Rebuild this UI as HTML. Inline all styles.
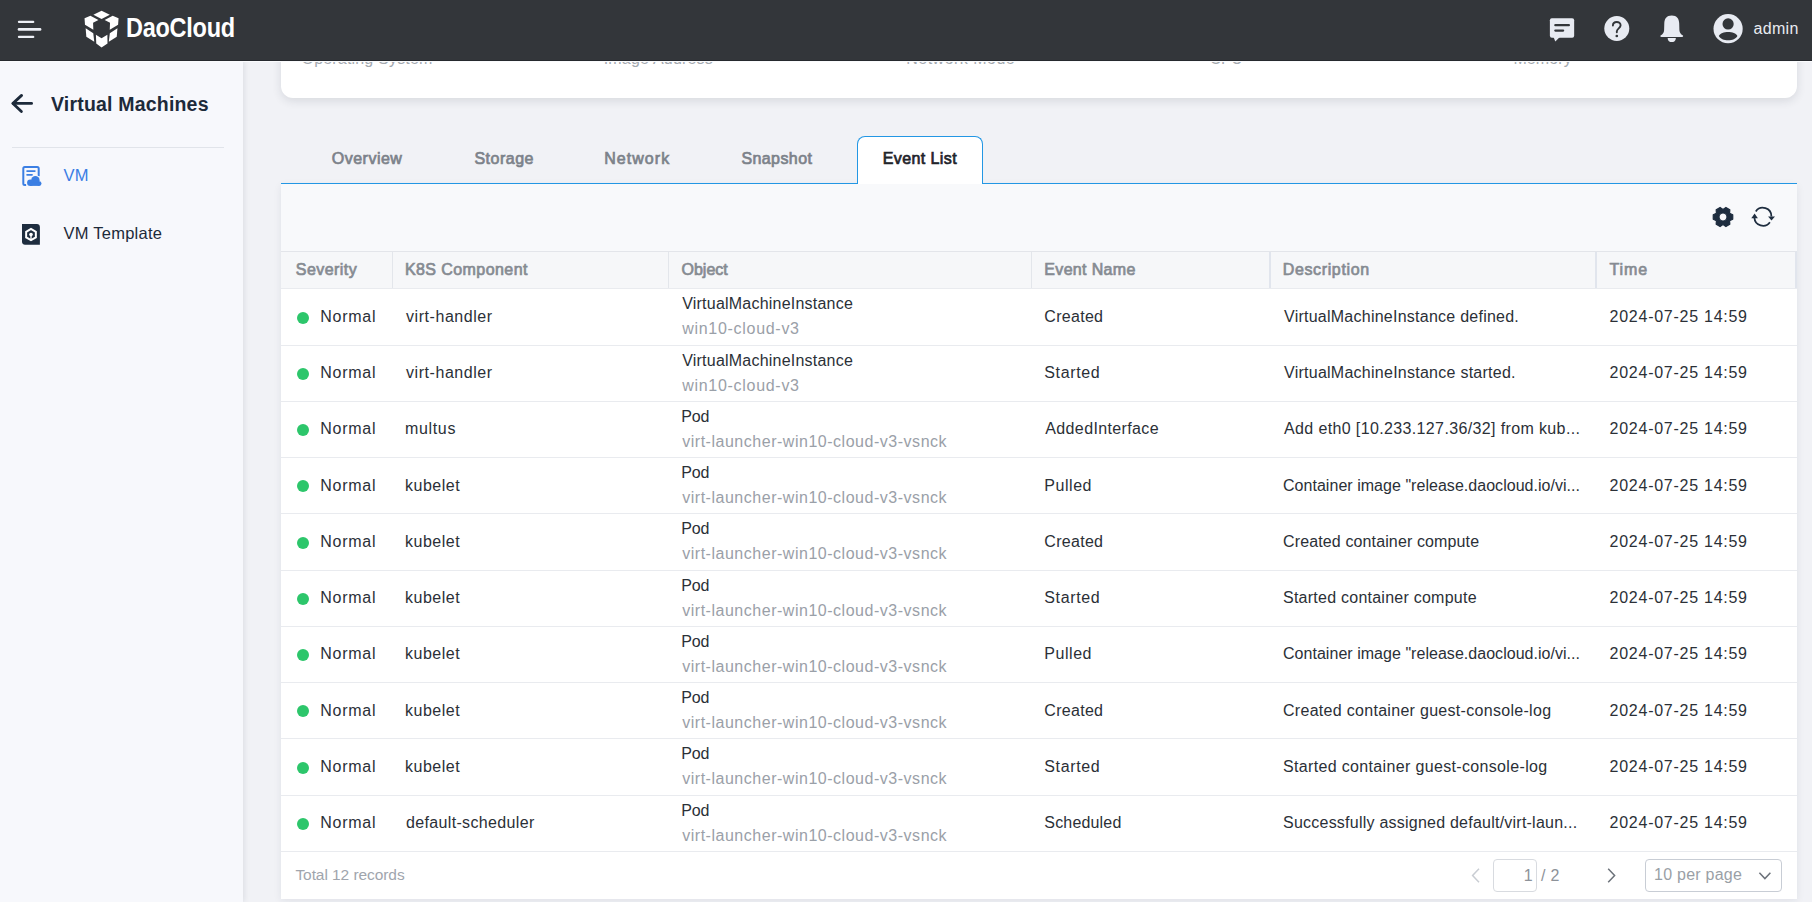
<!DOCTYPE html>
<html><head><meta charset="utf-8">
<style>
*{box-sizing:border-box;margin:0;padding:0}
html,body{width:1812px;height:902px;overflow:hidden;background:#f1f2f6;font-family:"Liberation Sans",sans-serif}
.t{position:absolute;white-space:pre;font-family:"Liberation Sans",sans-serif}
.abs{position:absolute}
#hdr{position:absolute;left:0;top:0;width:1812px;height:61px;background:#33363a;z-index:10}
#hdr:after{content:"";position:absolute;left:0;top:60px;width:1812px;height:1px;background:#26292e}
#hdrline{position:absolute;left:0;top:61px;width:1812px;height:1px;background:#fafbfd;z-index:10}
#side{position:absolute;left:0;top:61px;width:243px;height:841px;background:#f7f8fc;box-shadow:1px 0 6px rgba(20,30,50,.10);z-index:5}
#card1{position:absolute;left:281px;top:0;width:1516px;height:98px;background:#fff;border-radius:0 0 12px 12px;box-shadow:0 3px 10px rgba(30,40,60,.12)}
#tabline1{position:absolute;left:281px;top:183px;width:576px;height:1px;background:#2397e4}
#tabline2{position:absolute;left:983px;top:183px;width:814px;height:1px;background:#2397e4}
#tab{position:absolute;left:857px;top:136px;width:126px;height:48px;background:#fff;border:1px solid #2397e4;border-bottom:none;border-radius:8px 8px 0 0}
#card2{position:absolute;left:281px;top:184px;width:1516px;height:715px;background:#fff;box-shadow:0 2px 8px rgba(30,40,60,.08)}
#toolbar{position:absolute;left:281px;top:184px;width:1516px;height:67px;background:#f8f9fb}
#thead{position:absolute;left:281px;top:251px;width:1516px;height:38px;background:#f6f7f9;border-top:1px solid #e3e5ea;border-right:2px solid #e1e5ed}
.vl{position:absolute;top:252px;width:1px;height:36px;background:#e3e6eb}
.hl{position:absolute;left:281px;width:1516px;height:1px;background:#e9ebef}
.dot{position:absolute;left:297.0px;width:12px;height:12px;border-radius:50%;background:#2dc66b}
</style></head><body>
<div id="card1"></div>
<div id="card2"></div>
<div id="toolbar"></div>
<div id="tab"></div>
<div id="tabline1"></div><div id="tabline2"></div>
<div id="thead"></div>
<div class=vl style="left:392px"></div>
<div class=vl style="left:668px"></div>
<div class=vl style="left:1031px"></div>
<div class=vl style="left:1269px;width:2px;background:#e1e5ed"></div>
<div class=vl style="left:1595px;width:2px;background:#e1e5ed"></div>
<div class=hl style='top:288px'></div>
<div class=hl style='top:345px'></div>
<div class=hl style='top:401px'></div>
<div class=hl style='top:457px'></div>
<div class=hl style='top:513px'></div>
<div class=hl style='top:570px'></div>
<div class=hl style='top:626px'></div>
<div class=hl style='top:682px'></div>
<div class=hl style='top:738px'></div>
<div class=hl style='top:795px'></div>
<div class=hl style='top:851px'></div>
<div class=dot style='top:311.70px'></div>
<div class=dot style='top:367.95px'></div>
<div class=dot style='top:424.20px'></div>
<div class=dot style='top:480.45px'></div>
<div class=dot style='top:536.70px'></div>
<div class=dot style='top:592.95px'></div>
<div class=dot style='top:649.20px'></div>
<div class=dot style='top:705.45px'></div>
<div class=dot style='top:761.70px'></div>
<div class=dot style='top:817.95px'></div>

<!-- gear -->
<svg class=abs style="left:1711px;top:205px" width="24" height="24" viewBox="-12 -12 24 24">
 <path fill="#1e2d3f" stroke="#1e2d3f" stroke-width="1.2" stroke-linejoin="round" fill-rule="evenodd" d="M 9.74 -2.25 L 9.74 2.25 L 6.58 3.80 L 6.82 7.31 L 2.92 9.56 L 0.00 7.60 L -2.92 9.56 L -6.82 7.31 L -6.58 3.80 L -9.74 2.25 L -9.74 -2.25 L -6.58 -3.80 L -6.82 -7.31 L -2.92 -9.56 L -0.00 -7.60 L 2.92 -9.56 L 6.82 -7.31 L 6.58 -3.80 Z M 4.0 0 A 4.0 4.0 0 1 0 -4.0 0 A 4.0 4.0 0 1 0 4.0 0 Z"/>
</svg>
<!-- refresh -->
<svg class=abs style="left:1750px;top:204px" width="26" height="26" viewBox="-13 -13 26 26">
 <g fill="none" stroke="#1e2d3f" stroke-width="1.8">
  <path d="M -7.2 -5.6 A 8.6 8.6 0 0 1 8.4 -0.6"/>
  <path d="M 6.9 5.3 A 8.6 8.6 0 0 1 -8.6 0.8"/>
 </g>
 <path fill="#1e2d3f" d="M 5.1 -0.6 L 12.0 -0.6 L 8.5 3.4 Z"/>
 <path fill="#1e2d3f" d="M -11.7 1.2 L -5.1 1.2 L -8.4 -3.4 Z"/>
</svg>

<!-- pagination -->
<svg class=abs style="left:1468px;top:866px" width="16" height="19" viewBox="0 0 16 19">
 <path d="M 11 2.8 L 4.6 9.5 L 11 16.2" fill="none" stroke="#c9cdd3" stroke-width="1.5"/>
</svg>
<div class=abs style="left:1493px;top:859px;width:43.5px;height:33px;border:1px solid #d8dbe0;border-radius:4px;background:#fff"></div>
<svg class=abs style="left:1604px;top:866px" width="16" height="19" viewBox="0 0 16 19">
 <path d="M 4.2 2.8 L 10.6 9.5 L 4.2 16.2" fill="none" stroke="#6c727a" stroke-width="1.5"/>
</svg>
<div class=abs style="left:1644.5px;top:859px;width:137.5px;height:33px;border:1px solid #c8cdd5;border-radius:4px;background:#fff"></div>
<svg class=abs style="left:1757px;top:870px" width="16" height="12" viewBox="0 0 16 12">
 <path d="M 2.4 2.8 L 7.9 8.6 L 13.4 2.8" fill="none" stroke="#6c727a" stroke-width="1.5"/>
</svg>

<!-- sidebar -->
<div id="side">
 <div class=abs style="left:12px;top:86px;width:212px;height:1px;background:#e1e4ea"></div>
</div>

<div id="hdr"></div>
<div id="hdrline"></div>

<div style="position:absolute;left:0;top:0;z-index:6">
<!-- back arrow -->
<svg class=abs style="left:8px;top:90px" width="30" height="27" viewBox="0 0 30 27">
 <g fill="none" stroke="#1d2a3a" stroke-width="2.8" stroke-linecap="round" stroke-linejoin="round">
  <path d="M 5.0 13.4 L 23.6 13.4"/>
  <path d="M 13.6 5.4 L 5.0 13.4 L 13.4 21.6"/>
 </g>
</svg>
<!-- VM icon -->
<svg class=abs style="left:18px;top:162px" width="28" height="28" viewBox="0 0 28 28">
 <path d="M 8.7 22.9 L 6.8 22.9 Q 5.3 22.9 5.3 21.4 L 5.3 6.4 Q 5.3 4.9 6.8 4.9 L 19.2 4.9 Q 20.7 4.9 20.7 6.4 L 20.7 14.3" fill="none" stroke="#3b7fe3" stroke-width="2"/>
 <path d="M 9.1 9.1 L 16.8 9.1" stroke="#3b7fe3" stroke-width="1.8" stroke-linecap="round"/>
 <path d="M 9.1 12.85 L 14.0 12.85" stroke="#3b7fe3" stroke-width="1.8" stroke-linecap="round"/>
 <g fill="#f7f8fc">
  <circle cx="17.4" cy="18.4" r="5.4"/><circle cx="12.4" cy="20.7" r="4.3"/><circle cx="21.3" cy="21.6" r="3.3"/><rect x="8.2" y="20" width="16.5" height="5.3"/>
 </g>
 <g fill="#3b7fe3">
  <circle cx="17.4" cy="18.3" r="4.2"/><circle cx="12.3" cy="20.7" r="3.2"/><circle cx="21.2" cy="21.6" r="2.3"/><rect x="12.3" y="20.7" width="8.9" height="3.2"/>
 </g>
</svg>
<!-- VM Template icon -->
<svg class=abs style="left:18px;top:220px" width="28" height="28" viewBox="0 0 28 28">
 <path d="M 4 4 L 19 4 C 20.6 4 21.9 5.3 21.9 6.9 L 21.9 24.8 L 7.0 24.8 C 5.3 24.8 4 23.5 4 21.8 Z" fill="#1e2d3f"/>
 <polygon points="13.00,20.20 8.15,17.40 8.15,11.80 13.00,9.00 17.85,11.80 17.85,17.40" fill="none" stroke="#fff" stroke-width="2.0"/>
 <circle cx="13.0" cy="14.6" r="1.8" fill="#fff"/>
 <path d="M 13 15.8 L 13 19.6" stroke="#fff" stroke-width="1.3"/>
</svg>
</div>

<div style="position:absolute;left:0;top:0;z-index:11">
<!-- hamburger -->
<svg class=abs style="left:0;top:0" width="60" height="60" viewBox="0 0 60 60">
 <g stroke="#eef0f6" stroke-linecap="round" fill="none">
  <path d="M 19 21.9 L 33.2 21.9" stroke-width="2.3"/>
  <path d="M 19 29.4 L 40.1 29.4" stroke-width="2.6"/>
  <path d="M 19 36.9 L 33.2 36.9" stroke-width="2.3"/>
 </g>
</svg>
<!-- logo cube -->
<svg class=abs style="left:82.85px;top:8.97px" width="39.74" height="41.06" viewBox="1100 60 600 620">
 <g fill="#ffffff">
  <polygon points="1380,88 1505,148 1380,210 1257,148"/>
  <polygon points="1123,198 1212,163 1333,228 1252,268 1256,372 1130,298"/>
  <polygon points="1637,198 1548,163 1427,228 1508,268 1504,372 1630,298"/>
  <polygon points="1140,350 1255,425 1270,555 1150,478"/>
  <polygon points="1620,350 1505,425 1490,555 1610,478"/>
  <polygon points="1295,450 1380,500 1468,450 1470,580 1380,640 1300,580"/>
 </g>
</svg>
<!-- chat -->
<svg class=abs style="left:1548.83px;top:17.36px" width="26.49" height="25.6" viewBox="100 140 300 290">
 <rect x="110" y="155" width="275" height="220" rx="22" fill="#e8ebf2"/>
 <polygon points="148,360 228,360 172,418" fill="#e8ebf2"/>
 <g stroke="#33363a" stroke-width="26" stroke-linecap="round">
  <path d="M 172 233 L 325 233"/>
  <path d="M 172 294 L 260 294"/>
 </g>
</svg>
<!-- help -->
<svg class=abs style="left:1600px;top:12px" width="34" height="34" viewBox="0 0 34 34">
 <circle cx="16.8" cy="16.5" r="12.5" fill="#e8ebf2"/>
 <path d="M 12.9 13.6 C 12.9 8.8 20.6 8.8 20.6 13.3 C 20.6 16.2 16.8 16.6 16.8 19.6 L 16.8 20.2" fill="none" stroke="#33363a" stroke-width="1.9" stroke-linecap="round"/>
 <circle cx="16.8" cy="24.0" r="1.35" fill="#33363a"/>
</svg>
<!-- bell -->
<svg class=abs style="left:1655px;top:10px" width="34" height="36" viewBox="0 0 34 36">
 <path d="M 16.75 5.5 C 11.6 5.5 9.4 8.9 9.3 13.2 L 9.1 20.2 C 9.0 22.6 7.6 24.2 5.9 25.3 C 4.9 26.0 5.2 26.9 6.5 26.9 L 27.0 26.9 C 28.3 26.9 28.6 26.0 27.6 25.3 C 25.9 24.2 24.6 22.6 24.4 20.2 L 24.2 13.2 C 24.1 8.9 21.9 5.5 16.75 5.5 Z" fill="#e8ebf2"/>
 <path d="M 12.6 27.9 L 20.9 27.9 C 20.7 30.8 18.9 32.1 16.75 32.1 C 14.6 32.1 12.8 30.8 12.6 27.9 Z" fill="#e8ebf2"/>
</svg>
<!-- avatar -->
<svg class=abs style="left:1710px;top:10px" width="36" height="36" viewBox="0 0 36 36">
 <circle cx="18.1" cy="18.7" r="14.6" fill="#e8ebf2"/>
 <circle cx="18.1" cy="13.95" r="5.6" fill="#33363a"/>
 <path d="M 8.85 25.9 C 11.2 20.6 25.0 20.6 27.4 25.9 C 25.0 31.6 11.2 31.6 8.85 25.9 Z" fill="#33363a"/>
</svg>
<!-- DaoCloud -->
<div class=t style="left:125.8px;top:14.5px;font-size:27.0px;line-height:27.0px;font-weight:700;color:#fff;transform:scaleX(0.87);transform-origin:0 0;letter-spacing:-0.3px">DaoCloud</div>
</div>

<div class=t style="z-index:12;left:1753.5px;top:21.2px;font-size:16px;line-height:16px;font-weight:400;color:#e9ebf1;letter-spacing:0.3px;">admin</div>
<div class=t style="z-index:12;left:51.0px;top:95.2px;font-size:19.5px;line-height:19.5px;font-weight:700;color:#1d2a3a;letter-spacing:0.193px;">Virtual Machines</div>
<div class=t style="z-index:12;left:63.4px;top:167.2px;font-size:16.5px;line-height:16.5px;font-weight:400;color:#3a7de4;letter-spacing:0.4px;">VM</div>
<div class=t style="z-index:12;left:63.4px;top:225.1px;font-size:16.5px;line-height:16.5px;font-weight:400;color:#1d2a3a;letter-spacing:0.26px;">VM Template</div>
<div class=t style="z-index:1;left:301.5px;top:51.3px;font-size:16px;line-height:16px;font-weight:400;color:#a4a9b0;letter-spacing:0.187px;">Operating System</div>
<div class=t style="z-index:1;left:603.7px;top:51.3px;font-size:16px;line-height:16px;font-weight:400;color:#a4a9b0;letter-spacing:0.2px;">Image Address</div>
<div class=t style="z-index:1;left:906.3px;top:51.3px;font-size:16px;line-height:16px;font-weight:400;color:#a4a9b0;letter-spacing:0.473px;">Network Mode</div>
<div class=t style="z-index:1;left:1209.8px;top:51.3px;font-size:16px;line-height:16px;font-weight:400;color:#a4a9b0;letter-spacing:-0.4px;">CPU</div>
<div class=t style="z-index:1;left:1513.4px;top:51.3px;font-size:16px;line-height:16px;font-weight:400;color:#a4a9b0;letter-spacing:0.12px;">Memory</div>
<div class=t style="z-index:12;left:331.8px;top:151.1px;font-size:16px;line-height:16px;font-weight:400;color:#7c828a;letter-spacing:0.486px;-webkit-text-stroke:0.7px #7c828a;">Overview</div>
<div class=t style="z-index:12;left:474.4px;top:151.1px;font-size:16px;line-height:16px;font-weight:400;color:#7c828a;letter-spacing:0.5px;-webkit-text-stroke:0.7px #7c828a;">Storage</div>
<div class=t style="z-index:12;left:604.2px;top:151.1px;font-size:16px;line-height:16px;font-weight:400;color:#7c828a;letter-spacing:1.05px;-webkit-text-stroke:0.7px #7c828a;">Network</div>
<div class=t style="z-index:12;left:741.4px;top:151.1px;font-size:16px;line-height:16px;font-weight:400;color:#7c828a;letter-spacing:0.414px;-webkit-text-stroke:0.7px #7c828a;">Snapshot</div>
<div class=t style="z-index:12;left:882.7px;top:151.0px;font-size:16px;line-height:16px;font-weight:400;color:#1f242b;letter-spacing:0.411px;-webkit-text-stroke:0.7px #1f242b;">Event List</div>
<div class=t style="z-index:12;left:295.8px;top:262.1px;font-size:16px;line-height:16px;font-weight:400;color:#868b92;letter-spacing:0.443px;-webkit-text-stroke:0.7px #868b92;">Severity</div>
<div class=t style="z-index:12;left:404.9px;top:262.1px;font-size:16px;line-height:16px;font-weight:400;color:#868b92;letter-spacing:0.425px;-webkit-text-stroke:0.7px #868b92;">K8S Component</div>
<div class=t style="z-index:12;left:681.5px;top:262.1px;font-size:16px;line-height:16px;font-weight:400;color:#868b92;letter-spacing:0px;-webkit-text-stroke:0.7px #868b92;">Object</div>
<div class=t style="z-index:12;left:1044.3px;top:262.1px;font-size:16px;line-height:16px;font-weight:400;color:#868b92;letter-spacing:0.333px;-webkit-text-stroke:0.7px #868b92;">Event Name</div>
<div class=t style="z-index:12;left:1282.7px;top:262.1px;font-size:16px;line-height:16px;font-weight:400;color:#868b92;letter-spacing:0.64px;-webkit-text-stroke:0.7px #868b92;">Description</div>
<div class=t style="z-index:12;left:1609.4px;top:262.1px;font-size:16px;line-height:16px;font-weight:400;color:#868b92;letter-spacing:0.967px;-webkit-text-stroke:0.7px #868b92;">Time</div>
<div class=t style="z-index:12;left:320.2px;top:308.8px;font-size:16px;line-height:16px;font-weight:400;color:#2b3037;letter-spacing:0.76px;">Normal</div>
<div class=t style="z-index:12;left:406.0px;top:308.8px;font-size:16px;line-height:16px;font-weight:400;color:#2b3037;letter-spacing:0.555px;">virt-handler</div>
<div class=t style="z-index:12;left:682.2px;top:296.25px;font-size:16px;line-height:16px;font-weight:400;color:#2b3037;letter-spacing:0.219px;">VirtualMachineInstance</div>
<div class=t style="z-index:12;left:682.2px;top:321.35px;font-size:16px;line-height:16px;font-weight:400;color:#9aa0a8;letter-spacing:0.708px;">win10-cloud-v3</div>
<div class=t style="z-index:12;left:1044.3px;top:308.8px;font-size:16px;line-height:16px;font-weight:400;color:#2b3037;letter-spacing:0.3px;">Created</div>
<div class=t style="z-index:12;left:1284.0px;top:308.8px;font-size:16px;line-height:16px;font-weight:400;color:#2b3037;letter-spacing:0.247px;">VirtualMachineInstance defined.</div>
<div class=t style="z-index:12;left:1609.6px;top:308.8px;font-size:16px;line-height:16px;font-weight:400;color:#2b3037;letter-spacing:0.74px;">2024-07-25 14:59</div>
<div class=t style="z-index:12;left:320.2px;top:365.05px;font-size:16px;line-height:16px;font-weight:400;color:#2b3037;letter-spacing:0.76px;">Normal</div>
<div class=t style="z-index:12;left:406.0px;top:365.05px;font-size:16px;line-height:16px;font-weight:400;color:#2b3037;letter-spacing:0.555px;">virt-handler</div>
<div class=t style="z-index:12;left:682.2px;top:352.5px;font-size:16px;line-height:16px;font-weight:400;color:#2b3037;letter-spacing:0.219px;">VirtualMachineInstance</div>
<div class=t style="z-index:12;left:682.2px;top:377.6px;font-size:16px;line-height:16px;font-weight:400;color:#9aa0a8;letter-spacing:0.708px;">win10-cloud-v3</div>
<div class=t style="z-index:12;left:1044.3px;top:365.05px;font-size:16px;line-height:16px;font-weight:400;color:#2b3037;letter-spacing:0.633px;">Started</div>
<div class=t style="z-index:12;left:1284.0px;top:365.05px;font-size:16px;line-height:16px;font-weight:400;color:#2b3037;letter-spacing:0.257px;">VirtualMachineInstance started.</div>
<div class=t style="z-index:12;left:1609.6px;top:365.05px;font-size:16px;line-height:16px;font-weight:400;color:#2b3037;letter-spacing:0.74px;">2024-07-25 14:59</div>
<div class=t style="z-index:12;left:320.2px;top:421.3px;font-size:16px;line-height:16px;font-weight:400;color:#2b3037;letter-spacing:0.76px;">Normal</div>
<div class=t style="z-index:12;left:405.0px;top:421.3px;font-size:16px;line-height:16px;font-weight:400;color:#2b3037;letter-spacing:0.66px;">multus</div>
<div class=t style="z-index:12;left:681.2px;top:408.75px;font-size:16px;line-height:16px;font-weight:400;color:#2b3037;letter-spacing:-0.1px;">Pod</div>
<div class=t style="z-index:12;left:682.2px;top:433.85px;font-size:16px;line-height:16px;font-weight:400;color:#9aa0a8;letter-spacing:0.521px;">virt-launcher-win10-cloud-v3-vsnck</div>
<div class=t style="z-index:12;left:1045.3px;top:421.3px;font-size:16px;line-height:16px;font-weight:400;color:#2b3037;letter-spacing:0.369px;">AddedInterface</div>
<div class=t style="z-index:12;left:1284.0px;top:421.3px;font-size:16px;line-height:16px;font-weight:400;color:#2b3037;letter-spacing:0.368px;">Add eth0 [10.233.127.36/32] from kub...</div>
<div class=t style="z-index:12;left:1609.6px;top:421.3px;font-size:16px;line-height:16px;font-weight:400;color:#2b3037;letter-spacing:0.74px;">2024-07-25 14:59</div>
<div class=t style="z-index:12;left:320.2px;top:477.55px;font-size:16px;line-height:16px;font-weight:400;color:#2b3037;letter-spacing:0.76px;">Normal</div>
<div class=t style="z-index:12;left:405.0px;top:477.55px;font-size:16px;line-height:16px;font-weight:400;color:#2b3037;letter-spacing:0.5px;">kubelet</div>
<div class=t style="z-index:12;left:681.2px;top:465.0px;font-size:16px;line-height:16px;font-weight:400;color:#2b3037;letter-spacing:-0.1px;">Pod</div>
<div class=t style="z-index:12;left:682.2px;top:490.1px;font-size:16px;line-height:16px;font-weight:400;color:#9aa0a8;letter-spacing:0.521px;">virt-launcher-win10-cloud-v3-vsnck</div>
<div class=t style="z-index:12;left:1044.3px;top:477.55px;font-size:16px;line-height:16px;font-weight:400;color:#2b3037;letter-spacing:0.54px;">Pulled</div>
<div class=t style="z-index:12;left:1283.0px;top:477.55px;font-size:16px;line-height:16px;font-weight:400;color:#2b3037;letter-spacing:0.034px;">Container image &quot;release.daocloud.io/vi...</div>
<div class=t style="z-index:12;left:1609.6px;top:477.55px;font-size:16px;line-height:16px;font-weight:400;color:#2b3037;letter-spacing:0.74px;">2024-07-25 14:59</div>
<div class=t style="z-index:12;left:320.2px;top:533.8px;font-size:16px;line-height:16px;font-weight:400;color:#2b3037;letter-spacing:0.76px;">Normal</div>
<div class=t style="z-index:12;left:405.0px;top:533.8px;font-size:16px;line-height:16px;font-weight:400;color:#2b3037;letter-spacing:0.5px;">kubelet</div>
<div class=t style="z-index:12;left:681.2px;top:521.25px;font-size:16px;line-height:16px;font-weight:400;color:#2b3037;letter-spacing:-0.1px;">Pod</div>
<div class=t style="z-index:12;left:682.2px;top:546.35px;font-size:16px;line-height:16px;font-weight:400;color:#9aa0a8;letter-spacing:0.521px;">virt-launcher-win10-cloud-v3-vsnck</div>
<div class=t style="z-index:12;left:1044.3px;top:533.8px;font-size:16px;line-height:16px;font-weight:400;color:#2b3037;letter-spacing:0.3px;">Created</div>
<div class=t style="z-index:12;left:1283.0px;top:533.8px;font-size:16px;line-height:16px;font-weight:400;color:#2b3037;letter-spacing:0.129px;">Created container compute</div>
<div class=t style="z-index:12;left:1609.6px;top:533.8px;font-size:16px;line-height:16px;font-weight:400;color:#2b3037;letter-spacing:0.74px;">2024-07-25 14:59</div>
<div class=t style="z-index:12;left:320.2px;top:590.05px;font-size:16px;line-height:16px;font-weight:400;color:#2b3037;letter-spacing:0.76px;">Normal</div>
<div class=t style="z-index:12;left:405.0px;top:590.05px;font-size:16px;line-height:16px;font-weight:400;color:#2b3037;letter-spacing:0.5px;">kubelet</div>
<div class=t style="z-index:12;left:681.2px;top:577.5px;font-size:16px;line-height:16px;font-weight:400;color:#2b3037;letter-spacing:-0.1px;">Pod</div>
<div class=t style="z-index:12;left:682.2px;top:602.6px;font-size:16px;line-height:16px;font-weight:400;color:#9aa0a8;letter-spacing:0.521px;">virt-launcher-win10-cloud-v3-vsnck</div>
<div class=t style="z-index:12;left:1044.3px;top:590.05px;font-size:16px;line-height:16px;font-weight:400;color:#2b3037;letter-spacing:0.633px;">Started</div>
<div class=t style="z-index:12;left:1283.0px;top:590.05px;font-size:16px;line-height:16px;font-weight:400;color:#2b3037;letter-spacing:0.246px;">Started container compute</div>
<div class=t style="z-index:12;left:1609.6px;top:590.05px;font-size:16px;line-height:16px;font-weight:400;color:#2b3037;letter-spacing:0.74px;">2024-07-25 14:59</div>
<div class=t style="z-index:12;left:320.2px;top:646.3px;font-size:16px;line-height:16px;font-weight:400;color:#2b3037;letter-spacing:0.76px;">Normal</div>
<div class=t style="z-index:12;left:405.0px;top:646.3px;font-size:16px;line-height:16px;font-weight:400;color:#2b3037;letter-spacing:0.5px;">kubelet</div>
<div class=t style="z-index:12;left:681.2px;top:633.75px;font-size:16px;line-height:16px;font-weight:400;color:#2b3037;letter-spacing:-0.1px;">Pod</div>
<div class=t style="z-index:12;left:682.2px;top:658.85px;font-size:16px;line-height:16px;font-weight:400;color:#9aa0a8;letter-spacing:0.521px;">virt-launcher-win10-cloud-v3-vsnck</div>
<div class=t style="z-index:12;left:1044.3px;top:646.3px;font-size:16px;line-height:16px;font-weight:400;color:#2b3037;letter-spacing:0.54px;">Pulled</div>
<div class=t style="z-index:12;left:1283.0px;top:646.3px;font-size:16px;line-height:16px;font-weight:400;color:#2b3037;letter-spacing:0.034px;">Container image &quot;release.daocloud.io/vi...</div>
<div class=t style="z-index:12;left:1609.6px;top:646.3px;font-size:16px;line-height:16px;font-weight:400;color:#2b3037;letter-spacing:0.74px;">2024-07-25 14:59</div>
<div class=t style="z-index:12;left:320.2px;top:702.55px;font-size:16px;line-height:16px;font-weight:400;color:#2b3037;letter-spacing:0.76px;">Normal</div>
<div class=t style="z-index:12;left:405.0px;top:702.55px;font-size:16px;line-height:16px;font-weight:400;color:#2b3037;letter-spacing:0.5px;">kubelet</div>
<div class=t style="z-index:12;left:681.2px;top:690.0px;font-size:16px;line-height:16px;font-weight:400;color:#2b3037;letter-spacing:-0.1px;">Pod</div>
<div class=t style="z-index:12;left:682.2px;top:715.1px;font-size:16px;line-height:16px;font-weight:400;color:#9aa0a8;letter-spacing:0.521px;">virt-launcher-win10-cloud-v3-vsnck</div>
<div class=t style="z-index:12;left:1044.3px;top:702.55px;font-size:16px;line-height:16px;font-weight:400;color:#2b3037;letter-spacing:0.3px;">Created</div>
<div class=t style="z-index:12;left:1283.0px;top:702.55px;font-size:16px;line-height:16px;font-weight:400;color:#2b3037;letter-spacing:0.297px;">Created container guest-console-log</div>
<div class=t style="z-index:12;left:1609.6px;top:702.55px;font-size:16px;line-height:16px;font-weight:400;color:#2b3037;letter-spacing:0.74px;">2024-07-25 14:59</div>
<div class=t style="z-index:12;left:320.2px;top:758.8px;font-size:16px;line-height:16px;font-weight:400;color:#2b3037;letter-spacing:0.76px;">Normal</div>
<div class=t style="z-index:12;left:405.0px;top:758.8px;font-size:16px;line-height:16px;font-weight:400;color:#2b3037;letter-spacing:0.5px;">kubelet</div>
<div class=t style="z-index:12;left:681.2px;top:746.25px;font-size:16px;line-height:16px;font-weight:400;color:#2b3037;letter-spacing:-0.1px;">Pod</div>
<div class=t style="z-index:12;left:682.2px;top:771.35px;font-size:16px;line-height:16px;font-weight:400;color:#9aa0a8;letter-spacing:0.521px;">virt-launcher-win10-cloud-v3-vsnck</div>
<div class=t style="z-index:12;left:1044.3px;top:758.8px;font-size:16px;line-height:16px;font-weight:400;color:#2b3037;letter-spacing:0.633px;">Started</div>
<div class=t style="z-index:12;left:1283.0px;top:758.8px;font-size:16px;line-height:16px;font-weight:400;color:#2b3037;letter-spacing:0.341px;">Started container guest-console-log</div>
<div class=t style="z-index:12;left:1609.6px;top:758.8px;font-size:16px;line-height:16px;font-weight:400;color:#2b3037;letter-spacing:0.74px;">2024-07-25 14:59</div>
<div class=t style="z-index:12;left:320.2px;top:815.05px;font-size:16px;line-height:16px;font-weight:400;color:#2b3037;letter-spacing:0.76px;">Normal</div>
<div class=t style="z-index:12;left:406.0px;top:815.05px;font-size:16px;line-height:16px;font-weight:400;color:#2b3037;letter-spacing:0.344px;">default-scheduler</div>
<div class=t style="z-index:12;left:681.2px;top:802.5px;font-size:16px;line-height:16px;font-weight:400;color:#2b3037;letter-spacing:-0.1px;">Pod</div>
<div class=t style="z-index:12;left:682.2px;top:827.6px;font-size:16px;line-height:16px;font-weight:400;color:#9aa0a8;letter-spacing:0.521px;">virt-launcher-win10-cloud-v3-vsnck</div>
<div class=t style="z-index:12;left:1044.3px;top:815.05px;font-size:16px;line-height:16px;font-weight:400;color:#2b3037;letter-spacing:0.175px;">Scheduled</div>
<div class=t style="z-index:12;left:1283.0px;top:815.05px;font-size:16px;line-height:16px;font-weight:400;color:#2b3037;letter-spacing:0.232px;">Successfully assigned default/virt-laun...</div>
<div class=t style="z-index:12;left:1609.6px;top:815.05px;font-size:16px;line-height:16px;font-weight:400;color:#2b3037;letter-spacing:0.74px;">2024-07-25 14:59</div>
<div class=t style="z-index:12;left:295.4px;top:867.1px;font-size:15.5px;line-height:15.5px;font-weight:400;color:#a0a5ad;letter-spacing:-0.067px;">Total 12 records</div>
<div class=t style="z-index:12;left:1523.7px;top:868.0px;font-size:16px;line-height:16px;font-weight:400;color:#8d9299;letter-spacing:0px;">1</div>
<div class=t style="z-index:12;left:1541.0px;top:868.0px;font-size:16px;line-height:16px;font-weight:400;color:#8d9299;letter-spacing:0.3px;">/ 2</div>
<div class=t style="z-index:12;left:1654.1px;top:867.1px;font-size:16px;line-height:16px;font-weight:400;color:#9a9fa6;letter-spacing:0.24px;">10 per page</div>
</body></html>
